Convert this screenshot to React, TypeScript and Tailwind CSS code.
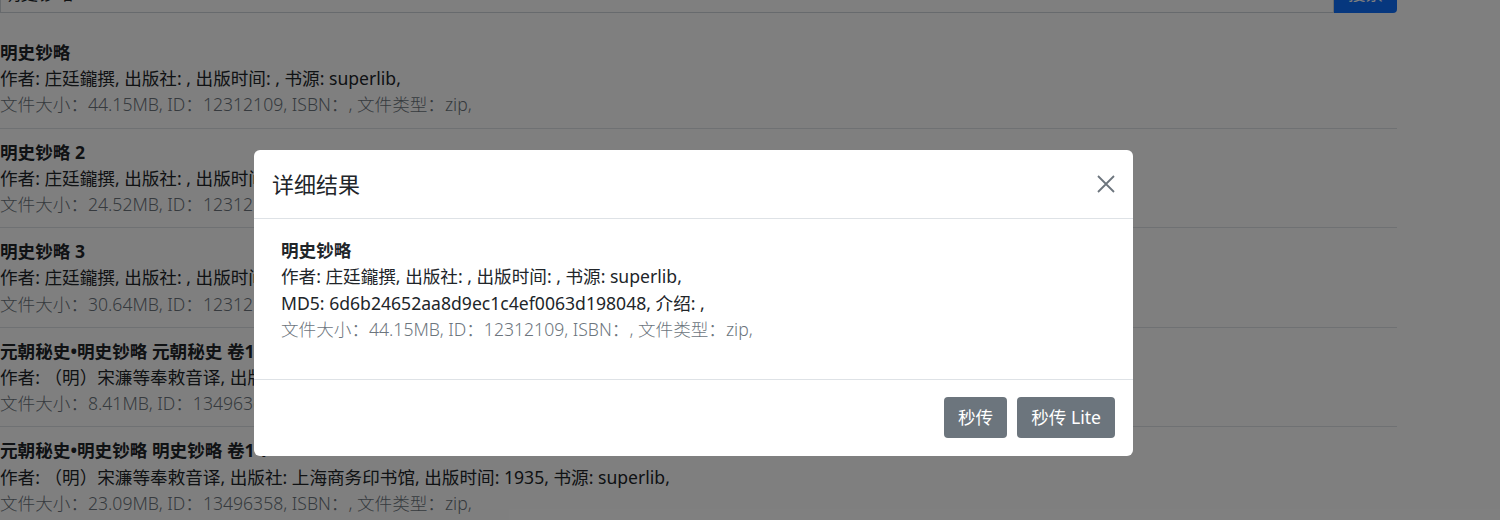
import React from "react";

type Book = {
  title: string;
  author: string;
  publisher: string;
  year: string;
  size: string;
  id: string;
};

const books: Book[] = [
  { title: "明史钞略", author: "庄廷鑨撰", publisher: "", year: "", size: "44.15MB", id: "12312109" },
  { title: "明史钞略 2", author: "庄廷鑨撰", publisher: "", year: "", size: "24.52MB", id: "12312126" },
  { title: "明史钞略 3", author: "庄廷鑨撰", publisher: "", year: "", size: "30.64MB", id: "12312127" },
  {
    title: "元朝秘史•明史钞略 元朝秘史 卷1-15",
    author: "（明）宋濂等奉敕音译",
    publisher: "上海商务印书馆",
    year: "1935",
    size: "8.41MB",
    id: "13496367",
  },
  {
    title: "元朝秘史•明史钞略 明史钞略 卷1-7",
    author: "（明）宋濂等奉敕音译",
    publisher: "上海商务印书馆",
    year: "1935",
    size: "23.09MB",
    id: "13496358",
  },
];

const font = { fontFamily: '"Noto Sans", "Noto Sans CJK SC", sans-serif' };

const BookItem = ({ book }: { book: Book }) => (
  <div className="border-b border-[#dee2e6] py-[10px] text-[17.6px] leading-[26.2px]">
    <div className="font-bold text-[#212529]">{book.title}</div>
    <div className="text-[#212529]">
      作者: {book.author}, 出版社: {book.publisher}, 出版时间: {book.year}, 书源: superlib,
    </div>
    <div className="font-light text-[#6c757d]">
      文件大小：{book.size}, ID：{book.id}, ISBN：, 文件类型：zip,
    </div>
  </div>
);

const DetailModal = () => (
  <div className="absolute left-[254px] top-[150px] w-[879px] rounded-[6px] bg-white text-[#212529]">
    <div className="flex h-[69px] items-center justify-between border-b border-[#dee2e6] px-[18px]">
      <h5 className="text-[22px] font-normal">详细结果</h5>
      <svg width="18" height="18" viewBox="0 0 18 18" className="text-[#6c757d]">
        <path d="M1 1L17 17M17 1L1 17" stroke="currentColor" strokeWidth="1.8" fill="none" />
      </svg>
    </div>
    <div className="px-[27px] pt-[18px] pb-[36px] text-[17.6px] leading-[26.4px]">
      <div className="font-bold">明史钞略</div>
      <div>作者: 庄廷鑨撰, 出版社: , 出版时间: , 书源: superlib,</div>
      <div>MD5: 6d6b24652aa8d9ec1c4ef0063d198048, 介绍: ,</div>
      <div className="font-light text-[#6c757d]">文件大小：44.15MB, ID：12312109, ISBN：, 文件类型：zip,</div>
    </div>
    <div className="flex h-[77px] items-center justify-end gap-[10px] border-t border-[#dee2e6] px-[18px]">
      <button className="h-[41px] rounded-[4px] bg-[#6c757d] px-[14px] text-[17.6px] text-white">秒传</button>
      <button className="h-[41px] rounded-[4px] bg-[#6c757d] px-[14px] text-[17.6px] text-white">秒传 Lite</button>
    </div>
  </div>
);

export default function App() {
  return (
    <div className="relative h-[520px] w-[1500px] overflow-hidden bg-white" style={font}>
      <div className="w-[1397px]">
        <div className="-mt-[26px] flex h-[39px]">
          <div className="flex flex-1 items-center border border-[#ced4da] px-[2px] text-[17.6px] text-[#212529]">
            明史钞略
          </div>
          <button className="w-[63px] rounded-r-[4px] bg-[#0d6efd] text-[17.6px] text-white">搜索</button>
        </div>
        <div className="mt-[16px]">
          {books.map((b) => (
            <BookItem key={b.id} book={b} />
          ))}
        </div>
      </div>
      <div className="absolute inset-0 bg-black/50" />
      <DetailModal />
    </div>
  );
}
